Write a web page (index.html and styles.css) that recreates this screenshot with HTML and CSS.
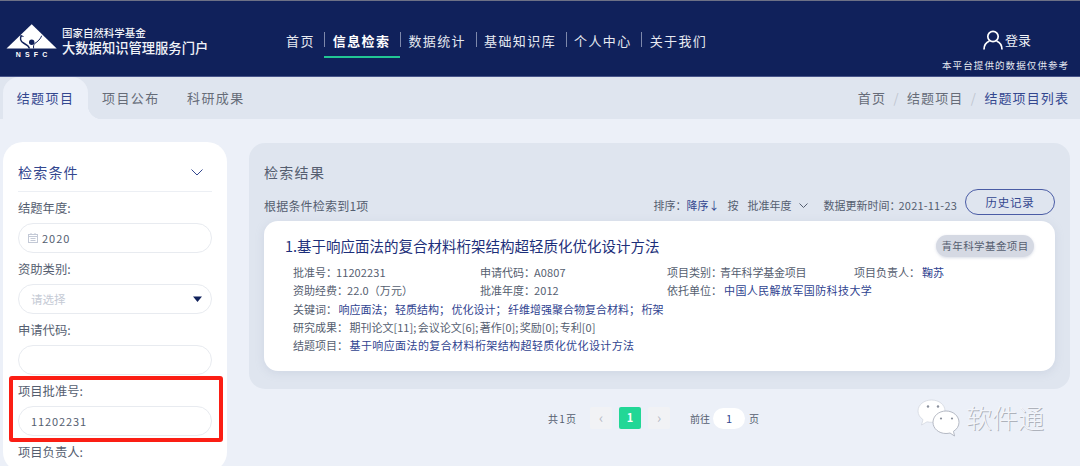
FILE: index.html
```html
<!DOCTYPE html>
<html lang="zh-CN">
<head>
<meta charset="utf-8">
<title>结题项目列表</title>
<link rel="stylesheet" href="styles.css">
</head>
<body>
<header class="header">
  <div class="logo">
    <svg class="logo-mark" width="52" height="40" viewBox="0 0 52 40">
      <path d="M.5 25.500 25.700 1.300 50.700 25.500Z" fill="#fff"/>
      <circle cx="25.700" cy="19.200" r="2.700" fill="#10215b"/>
      <path d="M15.500 12.500c-2 2.500-1 6 2 7.500l4 2.500c1 1 1.500 2 2 3" fill="none" stroke="#10215b" stroke-width="1.500"/>
      <path d="M14.500 12.500l3 1" fill="none" stroke="#10215b" stroke-width="1"/>
      <path d="M35.700 12.700c-1 3-4 6-7 7.800-1 1-1.500 3-1 5" fill="none" stroke="#10215b" stroke-width="1"/>
      <text x="9.700" y="33.700" class="logo-nsfc">NSFC</text>
    </svg>
    <div class="logo-text">
      <div class="logo-line1">国家自然科学基金</div>
      <div class="logo-line2">大数据知识管理服务门户</div>
    </div>
  </div>
  <nav class="nav">
    <a class="nav-item nav-first">首页</a>
    <a class="nav-item nav-active">信息检索</a>
    <a class="nav-item">数据统计</a>
    <a class="nav-item">基础知识库</a>
    <a class="nav-item">个人中心</a>
    <a class="nav-item">关于我们</a>
  </nav>
  <div class="user">
    <div class="login">
      <svg width="20" height="20" viewBox="0 0 20 20" fill="none" stroke="#fff" stroke-width="1.700">
        <circle cx="10" cy="6.500" r="5.200"/>
        <path d="M1 19.500c0-4.500 3-7.500 5.500-8.500M19 19.500c0-4.500-3-7.500-5.500-8.500"/>
      </svg>
      <span>登录</span>
    </div>
    <div class="notice">本平台提供的数据仅供参考</div>
  </div>
</header>

<div class="tabbar">
  <div class="tabs">
    <a class="tab tab-active">结题项目</a>
    <a class="tab">项目公布</a>
    <a class="tab">科研成果</a>
  </div>
  <div class="crumbs">
    <span>首页</span><i>/</i><span>结题项目</span><i>/</i><span class="crumb-current">结题项目列表</span>
  </div>
</div>

<main class="main">
  <aside class="side">
    <div class="side-head">
      <span>检索条件</span>
      <svg width="12" height="7" viewBox="0 0 12 7" fill="none" stroke="#33478f"><path d="M.5.500 6 6 11.500.500"/></svg>
    </div>
    <div class="field">
      <label>结题年度:</label>
      <div class="input">
        <svg class="cal" width="10" height="10" viewBox="0 0 10 10" fill="none" stroke="#c3c9d6"><rect x=".5" y="1.500" width="9" height="8"/><path d="M.5 3.500h9M2.500 5.500h5M2.500 7.500h5M3 0v2M7 0v2"/></svg>
        <span class="val-date">2020</span>
      </div>
    </div>
    <div class="field">
      <label>资助类别:</label>
      <div class="input input-select">
        <span class="placeholder">请选择</span>
        <svg width="9" height="6" viewBox="0 0 9 6"><path d="M0 .5h9L4.500 6Z" fill="#10215b"/></svg>
      </div>
    </div>
    <div class="field">
      <label>申请代码:</label>
      <div class="input"></div>
    </div>
    <div class="field field-mark">
      <label>项目批准号:</label>
      <div class="input"><span class="val">11202231</span></div>
    </div>
    <div class="field">
      <label>项目负责人:</label>
    </div>
  </aside>

  <section class="content">
    <div class="panel">
      <h2 class="panel-title">检索结果</h2>
      <div class="toolbar">
        <span class="count">根据条件检索到1项</span>
        <div class="sort">
          <span>排序：</span>
          <span class="sort-dir">降序↓</span>
          <span class="sort-by">按</span>
          <span class="sort-year">批准年度</span>
          <svg width="9" height="5" viewBox="0 0 9 5" fill="none" stroke="#555e70"><path d="M.5.500 4.500 4.500 8.500.500"/></svg>
          <span class="updated">数据更新时间：<b>2021-11-23</b></span>
          <button class="history">历史记录</button>
        </div>
      </div>
      <article class="card">
        <div class="card-head">
          <h3 class="card-title">1.基于响应面法的复合材料桁架结构超轻质化优化设计方法</h3>
          <span class="tag">青年科学基金项目</span>
        </div>
        <div class="meta-grid">
          <span>批准号：<em class="num">11202231</em></span>
          <span>申请代码：<em class="num">A0807</em></span>
          <span>项目类别：<em class="type">青年科学基金项目</em></span>
          <span>项目负责人：<a class="link name">鞠苏</a></span>
          <span>资助经费：<em class="num">22.0（万元）</em></span>
          <span>批准年度：<em class="num">2012</em></span>
          <span class="wide">依托单位：<a class="link name wide-link">中国人民解放军国防科技大学</a></span>
        </div>
        <div class="meta-line">关键词：<a class="link gap">响应面法；</a><a class="link gap">轻质结构；</a><a class="link gap">优化设计；</a><a class="link gap">纤维增强聚合物复合材料；</a><a class="link gap">桁架</a></div>
        <div class="meta-line">研究成果：<em class="gap result">期刊论文[11]; 会议论文[6]; 著作[0]; 奖励[0]; 专利[0]</em></div>
        <div class="meta-line">结题项目：<a class="link gap wide-link">基于响应面法的复合材料桁架结构超轻质化优化设计方法</a></div>
      </article>
    </div>
    <div class="pager">
      <span class="total">共 1 页</span>
      <span class="page-btn">‹</span>
      <span class="page-btn page-on">1</span>
      <span class="page-btn">›</span>
      <span class="goto">前往</span>
      <span class="goto-input">1</span>
      <span class="goto-end">页</span>
    </div>
  </section>
</main>

<div class="watermark">
  <svg width="44" height="40" viewBox="0 0 44 40">
    <path d="M14.500 2C7 2 1 6.800 1 13c0 3.500 1.900 6.500 5 8.600L4.500 27l5.500-3.200c1.500.3 3 .5 4.500.5C22 24.300 28 19.300 28 13S22 2 14.500 2Z" fill="#fff" stroke="#d0d4dd" stroke-width=".7"/>
    <path d="M29 13c-7.200 0-13 5-13 11.300S21.800 35.500 29 35.500c1.400 0 2.700-.2 4-.5l4.500 3-1-4.700c3.400-2 5.500-5.300 5.500-9C42 18 36.200 13 29 13Z" fill="#fff" stroke="#a4aab6" stroke-width=".8"/>
    <circle cx="11" cy="8.500" r="1.200" fill="#8a909c"/><circle cx="21" cy="8.500" r="1.200" fill="#8a909c"/>
    <circle cx="24" cy="20.500" r="1.100" fill="#8a909c"/><circle cx="35" cy="20.500" r="1.100" fill="#8a909c"/>
  </svg>
  <span>软件通</span>
</div>
</body>
</html>
```

FILE: styles.css
```css
* { box-sizing: border-box; }
html, body { margin: 0; padding: 0; }
body {
  width: 1080px;
  height: 466px;
  overflow: hidden;
  position: relative;
  background: #ecf0f8;
  color: #555e70;
  font-family: "Noto Sans CJK SC", "Noto Sans", sans-serif;
  font-size: 12px;
}
em { font-style: normal; }

.header {
  height: 77px;
  background: #10215b;
  border-top: 1px solid #6d7186;
  border-bottom: 1px solid #47548a;
  display: flex;
  color: #fff;
  padding-left: 6px;
}
.logo { display: flex; width: 280px; flex: none; padding-top: 22px; }
.logo-mark { flex: none; }
.logo-nsfc { font: bold 7px "Liberation Sans", sans-serif; letter-spacing: 4.200px; fill: #fff; }
.logo-text { margin-left: 4px; line-height: 14px; color: #f1f3f8; }
.logo-line1 { font-size: 10.500px; font-weight: 500; margin-top: 3px; letter-spacing: -.05px; }
.logo-line2 { font-size: 13.300px; font-weight: 500; margin-top: 1px; }

.nav { display: flex; margin-top: 24px; height: 33px; }
.nav-item {
  position: relative;
  height: 33px;
  padding: 6px 9.500px 0 8.500px;
  font-size: 13px;
  line-height: 20px;
  letter-spacing: 1.400px;
  color: #e6e9f1;
  white-space: nowrap;
}
.nav-item::before {
  content: "";
  position: absolute;
  left: 0; top: 7px;
  width: 1px; height: 15px;
  background: #7d88ab;
}
.nav-first { padding-left: 0; padding-right: 9.500px; }
.nav-first::before { display: none; }
.nav-active { font-weight: 700; color: #fff; border-bottom: 2px solid #22c794; }

.user { margin-left: auto; width: 138px; padding: 29px 11px 0 0; text-align: right; }
.login { display: flex; align-items: center; justify-content: flex-end; gap: 2px; padding-right: 38px; font-size: 13px; line-height: 20px; color: #f1f3f8; }
.notice { margin-top: 8px; font-size: 9.500px; line-height: 14px; letter-spacing: 1.100px; color: #e6e9f1; white-space: nowrap; }

.tabbar {
  height: 42px;
  background: #dfe5ef;
  display: flex;
  justify-content: space-between;
  padding: 0 11px 0 3px;
}
.tabs { display: flex; }
.tab {
  width: 85px;
  line-height: 42px;
  text-align: center;
  font-size: 13px;
  letter-spacing: 1.400px;
  color: #666c78;
}
.tab-active {
  position: relative;
  background: #ecf0f8;
  border-radius: 16px 16px 0 0;
  color: #33478f;
}
.tab-active::after {
  content: "";
  position: absolute;
  right: -14px; bottom: 0;
  width: 14px; height: 14px;
  background: radial-gradient(circle at 100% 0, #dfe5ef 14px, #ecf0f8 14.500px);
}
.tab-active + .tab { margin-left: 14px; width: 71px; text-align: left; }
.tab-active + .tab + .tab { margin-left: 14px; text-align: left; }
.crumbs { display: flex; font-size: 13px; line-height: 42px; letter-spacing: 1.100px; color: #666c78; }
.crumbs i { font-style: normal; width: 21px; text-align: center; color: #c0c5d0; }
.crumb-current { color: #33478f; }

.main { display: flex; padding: 23px 10px 0 3px; align-items: flex-start; }

.side {
  flex: none;
  width: 224px;
  height: 330px;
  padding: 0 15px;
  background: #fff;
  border-radius: 20px;
}
.side-head {
  height: 50px;
  display: flex;
  justify-content: space-between;
  align-items: center;
  padding: 11px 9px 0 0;
  border-bottom: 1px solid #eceff4;
  font-size: 14px;
  letter-spacing: 1.200px;
  color: #33478f;
}
.field { height: 61px; }
.field label { display: block; height: 31px; padding-top: 8px; line-height: 17px; font-size: 12.300px; color: #555e70; }
.input {
  height: 30px;
  border: 1px solid #e8ebf0;
  border-radius: 15px;
  display: flex;
  align-items: center;
  padding-left: 12px;
  font-size: 11px;
}
.input-select { justify-content: space-between; padding-right: 9px; }
.cal { margin-left: -3px; }
.val-date { margin-left: 4px; letter-spacing: 1px; }
.val { letter-spacing: .9px; }
.placeholder { color: #c5cad5; font-size: 11.500px; }
.field-mark { position: relative; }
.field-mark::before {
  content: "";
  position: absolute;
  left: -9px; right: -11px; top: 1px; bottom: -6px;
  border: 4px solid #fb1e14;
  border-radius: 3px;
}

.content { flex: none; width: 821px; margin-left: 22px; padding-top: 1px; }
.panel {
  height: 246px;
  background: #dfe5ef;
  border-radius: 16px;
  padding: 0 15px;
}
.panel-title { margin: 0; height: 46px; padding-top: 18px; font-weight: 400; font-size: 14px; line-height: 22px; letter-spacing: 1.300px; color: #555e70; }
.toolbar { height: 32px; display: flex; justify-content: space-between; align-items: flex-start; }
.count { line-height: 34px; font-size: 12px; letter-spacing: .2px; }
.sort { display: flex; align-items: center; height: 26px; font-size: 11px; }
.sort > span { padding-top: 6px; }
.sort-dir { color: #33478f; }
.sort-by { margin-left: 8px; }
.sort-year { margin-left: 9px; }
.sort svg { margin: 6px 0 0 7px; }
.updated { margin-left: 16px; white-space: nowrap; }
.updated b { font-weight: 400; letter-spacing: .2px; margin-left: -2px; }
.history {
  width: 90px; height: 26px;
  margin-left: 8px; padding: 0;
  background: transparent;
  border: 1px solid #4a5ca5;
  border-radius: 13px;
  color: #33478f;
  font: inherit;
  font-size: 11.500px;
  letter-spacing: .8px;
}
.card {
  height: 150px;
  background: #fff;
  border-radius: 14px;
  padding: 14px 21px 0 21px;
  font-size: 11px;
  line-height: 18.300px;
  box-shadow: 0 2px 8px rgba(160, 170, 195, .25);
}
.card-head { display: flex; justify-content: space-between; align-items: center; height: 22px; margin-bottom: 6px; }
.card-title { margin: 0; font-weight: 400; font-size: 14.500px; color: #1d2f7a; white-space: nowrap; }
.tag {
  width: 98px; height: 22px;
  background: #d5d9e3;
  border-radius: 11px;
  text-align: center;
  line-height: 22px;
  font-size: 10.500px;
  letter-spacing: .4px;
  box-shadow: 0 1px 3px rgba(160, 170, 195, .4);
}
.meta-grid { display: grid; grid-template-columns: repeat(4, 187px); padding-left: 8px; }
.meta-grid .wide { grid-column: span 2; }
.meta-line { padding-left: 8px; white-space: nowrap; }
.num { letter-spacing: .1px; margin-left: -1px; }
.type { letter-spacing: -.2px; margin-left: -2px; }
.link { color: #2f4390; }
.name { margin-left: 2px; }
.wide-link { letter-spacing: .4px; }
.gap { margin-left: 1.500px; }
.result { word-spacing: -1px; }

.pager { display: flex; align-items: center; height: 22px; margin-top: 18px; padding-left: 299px; font-size: 10px; }
.total { width: 42px; word-spacing: -1px; }
.page-btn {
  width: 22px; height: 22px;
  margin-right: 7px;
  background: #f1f2f5;
  border-radius: 2px;
  text-align: center;
  line-height: 20px;
  font-size: 14px;
  color: #b3b8c3;
}
.page-on { background: #22d796; color: #fff; font-size: 11px; font-weight: 700; }
.goto { margin-left: 13px; }
.goto-input { width: 32px; height: 21px; margin-left: 3px; background: #fff; border-radius: 11px; text-align: center; line-height: 21px; font-size: 11px; color: #33478f; }
.goto-end { margin-left: 4px; }

.watermark {
  position: absolute;
  left: 917px; top: 398px;
  display: flex;
  align-items: flex-start;
  color: #f3f5fa;
  font-size: 26px;
  line-height: 38px;
  font-weight: 300;
  text-shadow: 1px 1px 0 rgba(120, 125, 135, .55);
}
.watermark span { margin-left: 5px; }
```
